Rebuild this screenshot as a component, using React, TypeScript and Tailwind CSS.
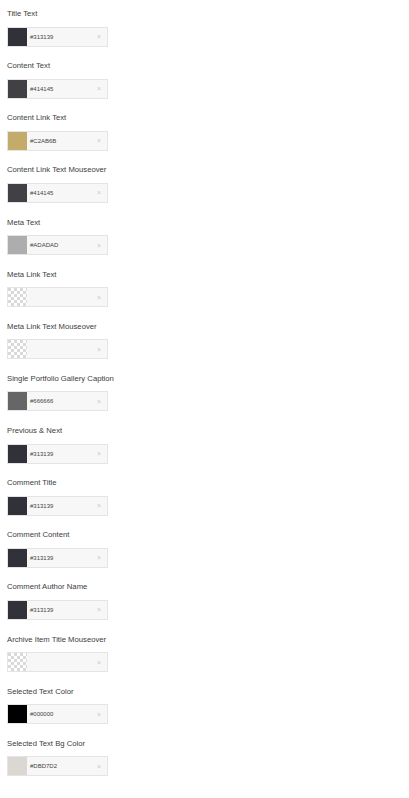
import React from "react";

const items: { label: string; color: string | null }[] = [
  { label: "Title Text", color: "#313139" },
  { label: "Content Text", color: "#414145" },
  { label: "Content Link Text", color: "#C2AB6B" },
  { label: "Content Link Text Mouseover", color: "#414145" },
  { label: "Meta Text", color: "#ADADAD" },
  { label: "Meta Link Text", color: null },
  { label: "Meta Link Text Mouseover", color: null },
  { label: "Single Portfolio Gallery Caption", color: "#666666" },
  { label: "Previous & Next", color: "#313139" },
  { label: "Comment Title", color: "#313139" },
  { label: "Comment Content", color: "#313139" },
  { label: "Comment Author Name", color: "#313139" },
  { label: "Archive Item Title Mouseover", color: null },
  { label: "Selected Text Color", color: "#000000" },
  { label: "Selected Text Bg Color", color: "#DBD7D2" },
];

function Checker() {
  return (
    <svg width="19" height="18" className="block">
      <defs>
        <pattern id="chk" width="6" height="6" patternUnits="userSpaceOnUse">
          <rect width="6" height="6" fill="#ffffff" />
          <rect width="3" height="3" fill="#d9d9d9" />
          <rect x="3" y="3" width="3" height="3" fill="#d9d9d9" />
        </pattern>
      </defs>
      <rect width="19" height="18" fill="url(#chk)" />
    </svg>
  );
}

export default function App() {
  return (
    <div
      className="w-[409px] h-[798px] bg-white pt-[9px] pl-[7px]"
      style={{ fontFamily: '"Liberation Sans", Arial, sans-serif' }}
    >
      {items.map((it, i) => (
        <div key={i} className="h-[52.14px] flex flex-col">
          <div className="text-[7.7px] leading-[10px] text-[#3c3c3c]">{it.label}</div>
          <div className="mt-[7.5px] w-[101px] h-[20px] border border-[#e4e4e4] bg-[#f7f7f7] flex items-center">
            <div className="w-[19px] h-full shrink-0" style={it.color ? { backgroundColor: it.color } : undefined}>
              {!it.color && <Checker />}
            </div>
            <div className="ml-[3px] text-[6px] leading-none text-[#444444] flex-1">
              {it.color ?? ""}
            </div>
            <div className="mr-[6px] text-[7px] leading-none text-[#c8c8c8]">×</div>
          </div>
        </div>
      ))}
    </div>
  );
}
